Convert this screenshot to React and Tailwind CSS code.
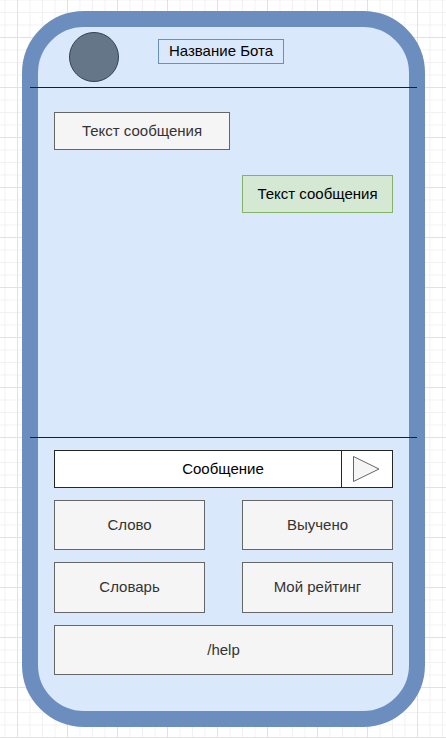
import React from "react";

export default function App() {
  return (
    <div
      className="w-[446px] h-[738px] overflow-hidden bg-white bg-[linear-gradient(to_right,#e2e2e2_1px,transparent_1px),linear-gradient(to_bottom,#e2e2e2_1px,transparent_1px),linear-gradient(to_right,#f1f1f1_1px,transparent_1px),linear-gradient(to_bottom,#f1f1f1_1px,transparent_1px)] bg-[size:50px_50px,50px_50px,12.5px_12.5px,12.5px_12.5px] bg-[position:17px_37px] pt-[11px] pl-[22px] font-['Liberation_Sans',Arial,sans-serif]"
    >
      <div className="w-[403px] h-[716px] rounded-[62px] border-[16px] border-[#6c8ebf] bg-[#dae8fc] flex flex-col">
        {/* header */}
        <div className="h-[60px] flex items-start">
          <div className="ml-[31px] mt-[5px] w-[50px] h-[50px] rounded-full bg-[#647687] border border-[#314354]" />
          <div className="ml-[39px] mt-[12px] w-[126px] h-[25px] border border-[#6c8ebf] bg-[#dae8fc] flex items-center justify-center text-[15px] text-black">
            Название Бота
          </div>
        </div>
        <div className="-mx-2 h-px bg-[#1f1f1f]" />
        {/* chat */}
        <div className="h-[349px] flex flex-col px-4 pt-[24px]">
          <div className="w-[176px] h-[38px] border border-[#666666] bg-[#f5f5f5] flex items-center justify-center text-[15px] text-[#333333]">
            Текст сообщения
          </div>
          <div className="self-end mt-[25px] w-[151px] h-[38px] border border-[#82b366] bg-[#d5e8d4] flex items-center justify-center text-[15px] text-black">
            Текст сообщения
          </div>
        </div>
        <div className="-mx-2 h-px bg-[#1f1f1f]" />
        {/* bottom */}
        <div className="flex flex-col px-4 pt-[12px]">
          <div className="h-[38px] border border-[#262626] bg-white flex">
            <div className="flex-1 pl-[50px] flex items-center justify-center text-[15px] text-black">
              Сообщение
            </div>
            <div className="w-[51px] border-l border-[#262626] flex items-center justify-center">
              <svg width="50" height="36" viewBox="0 0 50 36">
                <polygon points="11.5,5.5 37,18 11.5,30.5" fill="#f5f5f5" stroke="#666666" strokeWidth="1" />
              </svg>
            </div>
          </div>
          <div className="mt-[12px] grid grid-cols-[151px_151px] justify-between gap-y-[12px]">
            {["Слово", "Выучено", "Словарь", "Мой рейтинг"].map((t, i) => (
              <div
                key={t}
                className={
                  "border border-[#666666] bg-[#f5f5f5] flex items-center justify-center text-[15px] text-[#333333] " +
                  (i < 2 ? "h-[50px]" : "h-[51px]")
                }
              >
                {t}
              </div>
            ))}
          </div>
          <div className="mt-[12px] h-[50px] border border-[#666666] bg-[#f5f5f5] flex items-center justify-center text-[15px] text-[#333333]">
            /help
          </div>
        </div>
      </div>
    </div>
  );
}
